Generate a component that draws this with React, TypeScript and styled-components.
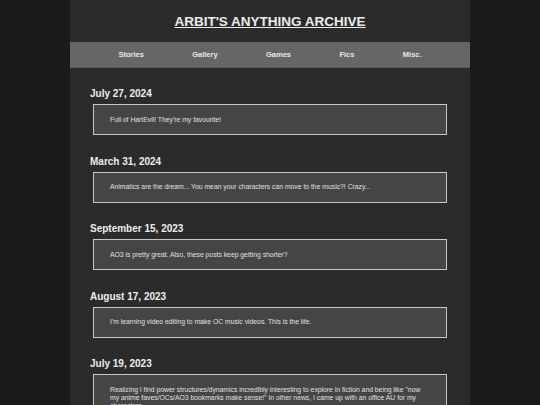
import React from "react";
import styled, { createGlobalStyle } from "styled-components";

const Global = createGlobalStyle`
  html, body { margin: 0; padding: 0; background: #1b1b1b; }
  body { font-family: "Liberation Sans", Arial, sans-serif; }
`;

const Page = styled.div`
  width: 400px;
  margin: 0 auto;
  min-height: 405px;
  background: #2b2b2b;
`;

const Header = styled.header`
  height: 42px;
  display: flex;
  align-items: center;
  justify-content: center;
`;

const Title = styled.h1`
  margin: 0;
  font-size: 13.5px;
  font-weight: bold;
  color: #ececec;
  text-decoration: underline;
  text-underline-offset: 1px;
`;

const Nav = styled.nav`
  height: 25px;
  background: #666;
  border-bottom: 1px solid #575757;
  display: flex;
  align-items: center;
  justify-content: space-evenly;
`;

const NavItem = styled.a`
  font-size: 7.5px;
  font-weight: bold;
  color: #e8e8e8;
  text-decoration: none;
`;

const Main = styled.main`
  padding: 20px 20px 0;
`;

const Post = styled.section`
  margin-bottom: 20.5px;
`;

const PostDate = styled.h2`
  margin: 0 0 4px;
  font-size: 10px;
  line-height: 12px;
  font-weight: bold;
  color: #ededed;
`;

const PostBox = styled.div`
  margin: 0 3px;
  box-sizing: border-box;
  border: 1px solid #c8c8c8;
  background: #454545;
  padding: 10.5px 20px 10.5px 16px;
  font-size: 6.8px;
  line-height: 8px;
  color: #e0e0e0;
`;

const posts = [
  { date: "July 27, 2024", text: "Full of HartEvil! They're my favourite!" },
  {
    date: "March 31, 2024",
    text: "Animatics are the dream... You mean your characters can move to the music?! Crazy...",
  },
  {
    date: "September 15, 2023",
    text: "AO3 is pretty great. Also, these posts keep getting shorter?",
  },
  {
    date: "August 17, 2023",
    text: "I'm learning video editing to make OC music videos. This is the life.",
  },
  {
    date: "July 19, 2023",
    text: "Realizing I find power structures/dynamics incredibly interesting to explore in fiction and being like \"now my anime faves/OCs/AO3 bookmarks make sense!\" In other news, I came up with an office AU for my characters.",
  },
];

const navItems = ["Stories", "Gallery", "Games", "Fics", "Misc."];

export default function App() {
  return (
    <>
      <Global />
      <Page>
        <Header>
          <Title>ARBIT'S ANYTHING ARCHIVE</Title>
        </Header>
        <Nav>
          {navItems.map((n) => (
            <NavItem key={n} href="#">
              {n}
            </NavItem>
          ))}
        </Nav>
        <Main>
          {posts.map((p) => (
            <Post key={p.date}>
              <PostDate>{p.date}</PostDate>
              <PostBox>{p.text}</PostBox>
            </Post>
          ))}
        </Main>
      </Page>
    </>
  );
}
